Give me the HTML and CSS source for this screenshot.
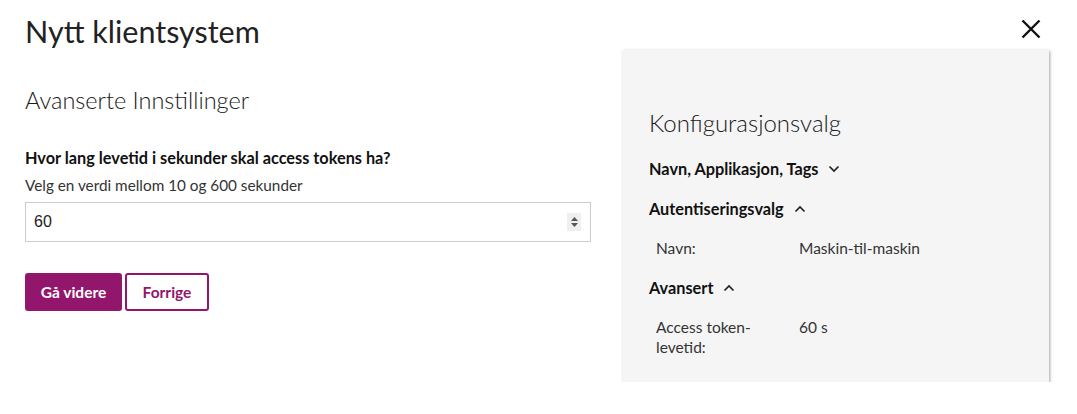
FILE: index.html
```html
<!DOCTYPE html>
<html lang="no">
<head>
<meta charset="utf-8">
<link rel="stylesheet" href="styles.css">
</head>
<body>
<div class="page">
  <main class="left">
    <h1 class="title">Nytt klientsystem</h1>
    <h2 class="subtitle">Avanserte Innstillinger</h2>
    <label class="label" for="ttl">Hvor lang levetid i sekunder skal access tokens ha?</label>
    <p class="help">Velg en verdi mellom 10 og 600 sekunder</p>
    <div class="input">
      <span class="value">60</span>
      <span class="spin">
        <svg width="11" height="16" viewBox="0 0 11 16"><path d="M5.5 3 L9 7 L2 7 Z M2 9 L9 9 L5.5 13 Z" fill="#555"/></svg>
      </span>
    </div>
    <div class="buttons">
      <button class="btn primary">Gå videre</button>
      <button class="btn secondary">Forrige</button>
    </div>
  </main>
  <aside class="right">
    <div class="closerow">
      <svg class="close" width="20" height="20" viewBox="0 0 20 20"><path d="M1.5 1.5 L18.5 18.5 M18.5 1.5 L1.5 18.5" stroke="#111" stroke-width="2.4" fill="none"/></svg>
    </div>
    <section class="panel">
      <h3 class="ptitle">Konfigurasjonsvalg</h3>
      <div class="sect first">
        <span>Navn, Applikasjon, Tags</span>
        <svg class="chev" width="12" height="8" viewBox="0 0 12 8"><path d="M1.5 1.5 L6 6 L10.5 1.5" stroke="#222" stroke-width="1.7" fill="none"/></svg>
      </div>
      <div class="sect">
        <span>Autentiseringsvalg</span>
        <svg class="chev" width="12" height="8" viewBox="0 0 12 8"><path d="M1.5 6.5 L6 2 L10.5 6.5" stroke="#222" stroke-width="1.7" fill="none"/></svg>
      </div>
      <div class="row">
        <span class="k">Navn:</span><span class="v">Maskin-til-maskin</span>
      </div>
      <div class="sect">
        <span>Avansert</span>
        <svg class="chev" width="12" height="8" viewBox="0 0 12 8"><path d="M1.5 6.5 L6 2 L10.5 6.5" stroke="#222" stroke-width="1.7" fill="none"/></svg>
      </div>
      <div class="row">
        <span class="k">Access token-<br>levetid:</span><span class="v">60 s</span>
      </div>
    </section>
  </aside>
</div>
</body>
</html>
```

FILE: styles.css
```css
* { box-sizing: border-box; }
html, body { margin: 0; background: #fff; }
body { font-family: Lato, "Open Sans", sans-serif; color: #222; }

.page {
  display: flex;
  padding: 0 28px 0 25px;
}
.left {
  width: 566px;
  display: flex;
  flex-direction: column;
}
.title {
  margin: 13px 0 0;
  font-size: 30.5px;
  font-weight: 400;
  line-height: 36px;
  color: #222;
}
.subtitle {
  margin: 37px 0 0;
  font-size: 23.5px;
  font-weight: 300;
  line-height: 28px;
  color: #1a1a1a;
}
.label {
  margin-top: 34px;
  font-size: 16.3px;
  font-weight: 700;
  line-height: 20px;
  color: #111;
}
.help {
  margin: 7px 0 0;
  font-size: 15.3px;
  line-height: 20px;
  color: #333;
}
.input {
  margin-top: 7px;
  height: 40px;
  border: 1px solid #ccc;
  display: flex;
  align-items: center;
  justify-content: space-between;
  padding: 0 9px 0 8px;
  font-family: "Liberation Sans", Arial, sans-serif;
  font-size: 16px;
  color: #222;
}
.spin {
  width: 14px;
  height: 18px;
  background: #efefef;
  display: flex;
  align-items: center;
  justify-content: center;
}
.buttons {
  margin-top: 31px;
  display: flex;
  gap: 3px;
}
.btn {
  height: 38px;
  border-radius: 3px;
  font-family: Lato, sans-serif;
  font-size: 15.5px;
  font-weight: 700;
  padding: 0;
}
.primary {
  width: 97px;
  background: #92166b;
  border: 2px solid #92166b;
  color: #fff;
}
.secondary {
  width: 84px;
  background: #fff;
  border: 2px solid #92166b;
  color: #92166b;
}

.right {
  margin-left: 32px;
  width: 426px;
  display: flex;
  flex-direction: column;
}
.closerow {
  height: 50px;
  display: flex;
  justify-content: flex-end;
  align-items: flex-start;
  padding: 19px 8px 0 0;
}
.panel {
  height: 332px;
  background: #f5f5f5;
  box-shadow: 1px 1px 3px rgba(0,0,0,0.35);
  padding: 57px 26px 0;
}
.ptitle {
  margin: 0;
  font-size: 24px;
  font-weight: 300;
  line-height: 32px;
  color: #1a1a1a;
}
.sect {
  display: flex;
  align-items: center;
  gap: 10px;
  font-size: 16.3px;
  font-weight: 700;
  color: #111;
  line-height: 20px;
  margin-top: 20px;
}
.sect.first { margin-top: 20px; }
.row {
  display: flex;
  margin: 19px 0 0 7px;
  font-size: 15.5px;
  line-height: 20px;
  color: #333;
}
.row .k { width: 143px; }
```
